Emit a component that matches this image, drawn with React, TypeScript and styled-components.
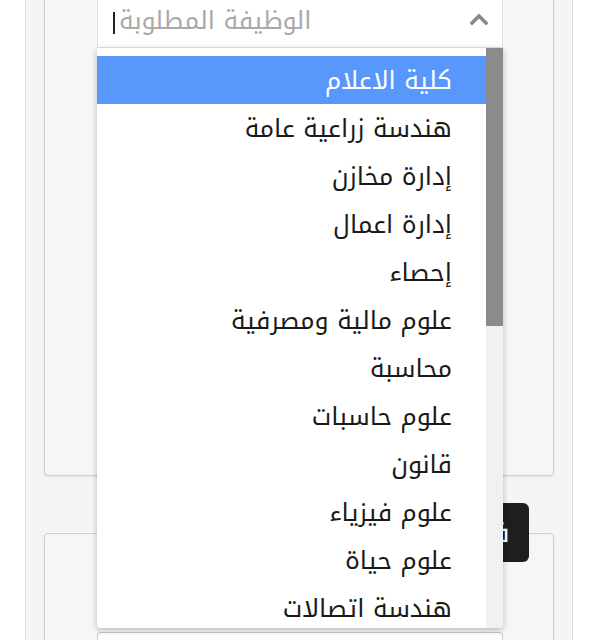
import React from 'react';
import styled, { createGlobalStyle } from 'styled-components';

const GlobalStyle = createGlobalStyle`
  html, body {
    margin: 0;
    padding: 0;
    background: #ffffff;
    height: 640px;
    overflow: hidden;
  }
  body {
    font-family: "Noto Kufi Arabic", "Noto Sans Arabic", "DejaVu Sans", sans-serif;
  }
`;

const faculties = [
  'كلية الاعلام',
  'هندسة زراعية عامة',
  'إدارة مخازن',
  'إدارة اعمال',
  'إحصاء',
  'علوم مالية ومصرفية',
  'محاسبة',
  'علوم حاسبات',
  'قانون',
  'علوم فيزياء',
  'علوم حياة',
  'هندسة اتصالات',
];

export default function App() {
  return (
    <>
      <GlobalStyle />
      <Page>
        <OuterPanel>
          <Card $height={496}>
            <SelectWrap>
              <SelectBox>
                <Caret />
                <Placeholder>الوظيفة المطلوبة</Placeholder>
                <Chevron viewBox="0 0 18 12">
                  <polyline points="2,10 9,3 16,10" />
                </Chevron>
              </SelectBox>
              <Dropdown>
                <OptionList>
                  {faculties.map((name, i) => (
                    <Option key={name} $active={i === 0}>
                      {name}
                    </Option>
                  ))}
                </OptionList>
                <ScrollTrack>
                  <ScrollThumb />
                </ScrollTrack>
              </Dropdown>
            </SelectWrap>
          </Card>
          <Card $height={140} $gap={57} $padTop={98}>
            <SelectBox $bordered />
          </Card>
          <FloatButton>فلترة</FloatButton>
        </OuterPanel>
      </Page>
    </>
  );
}

/* ----- STYLES ----- */

const Page = styled.div`
  margin-top: -30px;
`;

const OuterPanel = styled.div`
  position: relative;
  margin-left: 25px;
  width: 548px;
  box-sizing: border-box;
  padding: 10px 18px 0 18px;
  background: #f5f5f5;
  border-left: 1px solid #dcdcdc;
  border-right: 1px solid #dcdcdc;
  height: 720px;
`;

const Card = styled.div<{ $height: number; $gap?: number; $padTop?: number }>`
  height: ${(p) => p.$height}px;
  margin-top: ${(p) => p.$gap ?? 0}px;
  box-sizing: border-box;
  padding: ${(p) => p.$padTop ?? 15}px 50px 0 52px;
  background: #f6f6f6;
  border: 1px solid #cfcfcf;
  border-radius: 4px;
  box-shadow: 0 1px 2px rgba(0, 0, 0, 0.08);
`;

const SelectWrap = styled.div`
  position: relative;
  z-index: 5;
`;

const SelectBox = styled.div<{ $bordered?: boolean }>`
  height: 52px;
  box-sizing: border-box;
  display: flex;
  align-items: center;
  padding: 0 14px 0 15px;
  background: #ffffff;
  border: 1px solid ${(p) => (p.$bordered ? '#c8c8c8' : '#e2e2e2')};
  border-radius: ${(p) => (p.$bordered ? '4px' : '0')};
`;

const Caret = styled.span`
  width: 2px;
  height: 22px;
  background: #222;
  margin-right: 4px;
  margin-top: 2px;
`;

const Placeholder = styled.span`
  flex: 1;
  font-size: 25px;
  color: #a9a9a9;
  line-height: 1;
  direction: rtl;
  text-align: left;
  margin-top: -4px;
`;

const Chevron = styled.svg`
  width: 18px;
  height: 12px;
  margin-bottom: 7px;
  fill: none;
  stroke: #888888;
  stroke-width: 3.6;
  stroke-linecap: square;
`;

const Dropdown = styled.div`
  position: absolute;
  top: 100%;
  left: 0;
  right: 0;
  height: 580px;
  display: flex;
  overflow: hidden;
  background: #ffffff;
  border-radius: 0 0 4px 4px;
  box-shadow: 0 2px 6px rgba(0, 0, 0, 0.25);
`;

const OptionList = styled.ul`
  flex: 1;
  list-style: none;
  margin: 0;
  padding: 8px 0 0 0;
  direction: rtl;
`;

const Option = styled.li<{ $active: boolean }>`
  height: 48px;
  display: flex;
  align-items: center;
  padding-right: 34px;
  font-size: 25px;
  color: ${(p) => (p.$active ? '#ffffff' : '#1a1a1a')};
  background: ${(p) => (p.$active ? '#5897fb' : 'transparent')};
`;

const ScrollTrack = styled.div`
  width: 17px;
  flex-shrink: 0;
  background: #f1f1f1;
`;

const ScrollThumb = styled.div`
  height: 278px;
  background: #8b8b8b;
`;

const FloatButton = styled.div`
  position: absolute;
  top: 533px;
  left: 420px;
  width: 83px;
  height: 59px;
  box-sizing: border-box;
  padding-right: 12px;
  display: flex;
  align-items: center;
  justify-content: flex-end;
  direction: rtl;
  background: #1e1e1e;
  color: #ffffff;
  font-size: 28px;
  border-radius: 6px;
`;
